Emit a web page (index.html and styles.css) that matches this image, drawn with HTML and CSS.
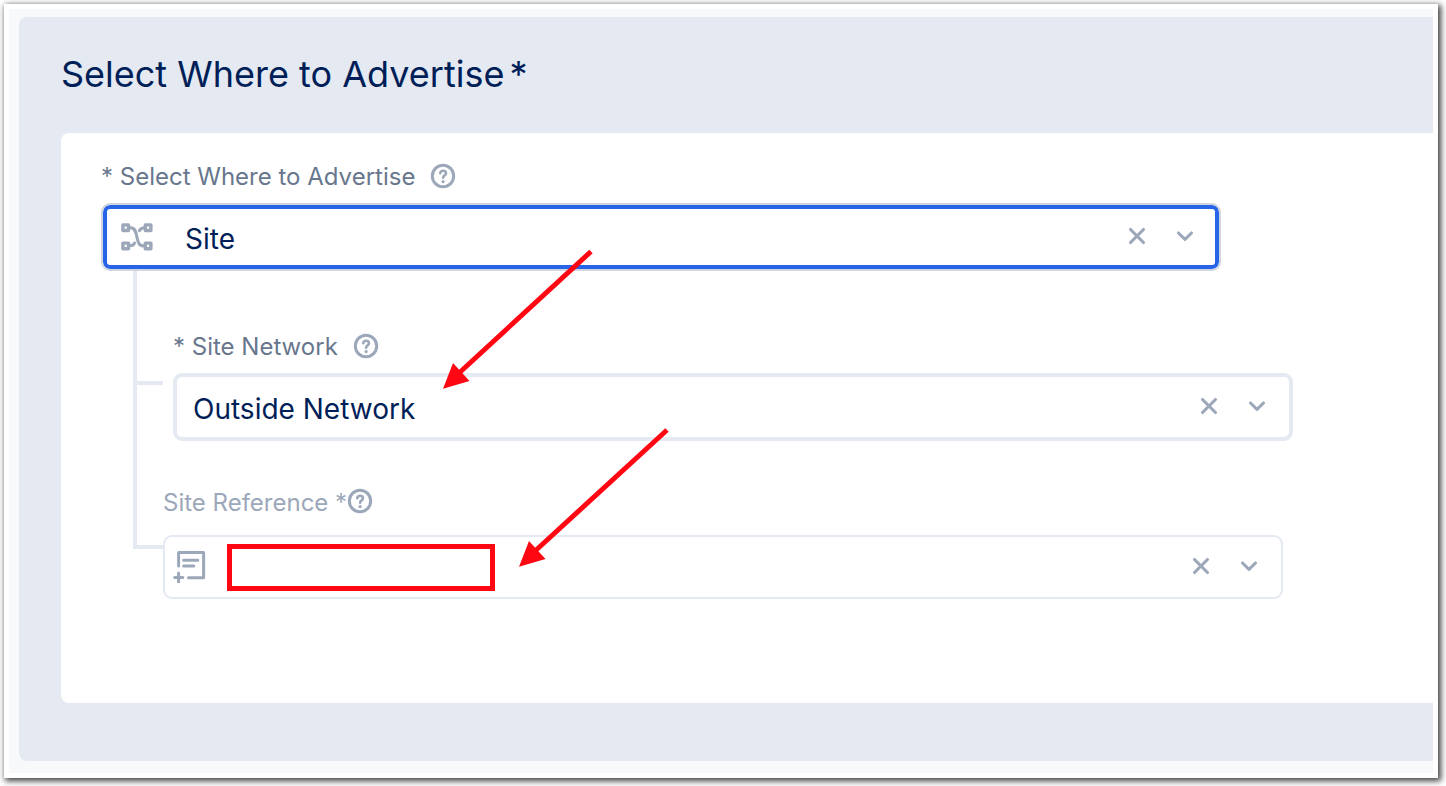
FILE: index.html
```
<!DOCTYPE html>
<html lang="en">
<head>
<meta charset="utf-8">
<title>Select Where to Advertise</title>
<link rel="stylesheet" href="styles.css">
</head>
<body>
<svg class="symbols" width="0" height="0" aria-hidden="true">
  <symbol id="help" viewBox="0 0 26 26">
    <circle cx="13" cy="13" r="10.700" stroke-width="3"/>
    <path d="M10.2 10.2c.3-1.7 1.4-2.500 2.900-2.500 1.700 0 2.900 1 2.900 2.500 0 1.200-.7 1.700-1.600 2.400-.9.7-1.300 1.100-1.300 2.200" stroke-width="2.6"/>
    <circle cx="13.1" cy="18.600" r="1.600" fill="currentColor" stroke="none"/>
  </symbol>
  <symbol id="clear" viewBox="0 0 20 20">
    <path d="M3.500 3.500 16.500 16.500M16.500 3.500 3.500 16.500" stroke-width="3.1"/>
  </symbol>
  <symbol id="chevron" viewBox="0 0 20 20">
    <path d="M3.500 7 10 13.300 16.500 7" stroke-width="3.1"/>
  </symbol>
</svg>
<main class="window">
  <div class="page">
    <section class="panel">
      <h1 class="title">Select Where to Advertise<span class="star">*</span></h1>
      <div class="card">
        <div class="label">* Select Where to Advertise<svg class="help"><use href="#help"/></svg></div>
        <div class="select focused">
          <svg class="lead" viewBox="0 0 32 28">
            <g stroke-width="3.4"><rect x="1.900" y="1.900" width="5.600" height="5.600"/><rect x="24.300" y="1.900" width="5.600" height="5.600"/><rect x="1.900" y="20.100" width="5.600" height="5.600"/><rect x="24.300" y="20.100" width="5.600" height="5.600"/></g>
            <path stroke-width="3.1" d="M8 4.700h1.800C18.500 4.700 13.200 22.900 22.200 22.900H24M24 4.700c-3 0-4.700.8-5.600 2.900M8 22.900c3 0 4.700-.8 5.600-2.900"/>
          </svg>
          <span class="value">Site</span>
          <svg class="action"><use href="#clear"/></svg>
          <svg class="action"><use href="#chevron"/></svg>
        </div>
        <div class="tree">
          <div class="rail"><div class="branch first"></div><div class="branch last"></div></div>
          <div class="children">
            <div class="network">
              <div class="label">* Site Network<svg class="help"><use href="#help"/></svg></div>
              <div class="select heavy">
                <span class="value">Outside Network</span>
                <svg class="action"><use href="#clear"/></svg>
                <svg class="action"><use href="#chevron"/></svg>
              </div>
            </div>
            <div class="label muted">Site Reference *<svg class="help"><use href="#help"/></svg></div>
            <div class="select plain">
              <svg class="lead note" viewBox="0 0 34 34">
                <path stroke-width="3" d="M5.600 17V3.500H30.600V28.700H15.500M10.600 11.200H24.800M10.600 17H20.800M5.600 24V33M1.600 28.500H9.800"/>
              </svg>
              <span class="redaction"></span>
              <svg class="action"><use href="#clear"/></svg>
              <svg class="action"><use href="#chevron"/></svg>
            </div>
          </div>
        </div>
      </div>
    </section>
  </div>
</main>
<svg class="arrows" viewBox="0 0 1446 786">
  <path d="M591 251.500 458 374M667 430 534 552" />
  <polygon points="443,388.700 453,363 469.500,381"/>
  <polygon points="519,566.800 529,541 545.500,559"/>
</svg>
</body>
</html>
```

FILE: styles.css
```
* { box-sizing: border-box; }
body {
  margin: 0;
  padding: 4px 8px 8px 4px;
  background: #fff;
  font-family: Inter, "Liberation Sans", sans-serif;
  overflow: hidden;
}
svg { fill: none; stroke: currentColor; stroke-linecap: round; stroke-linejoin: round; flex: none; }
.symbols { position: absolute; }
.window {
  height: 774px;
  padding: 5px;
  background: #fff;
  box-shadow: 2px 2px 6px 1px rgba(0, 0, 0, .75);
}
.page { height: 764px; padding: 8px 0 12px 10px; background: #f7f9fb; }
.panel {
  height: 744px;
  padding-left: 42px;
  border-radius: 8px 0 0 8px;
  background: #e4e9f2;
}
.title {
  margin: 0;
  height: 116px;
  line-height: 114px;
  font-size: 36px;
  font-weight: 400;
  color: #001e57;
}
.star { margin-left: 5px; }
.card {
  height: 570px;
  padding: 20px 0 0 40px;
  border-radius: 8px 0 0 8px;
  background: #fff;
}
.label {
  display: flex;
  align-items: center;
  height: 48px;
  padding-bottom: 2px;
  font-size: 24px;
  color: #68778d;
  white-space: pre;
}
.help { width: 26px; height: 26px; margin-left: 15px; color: #9ca8ba; }
.select {
  display: flex;
  align-items: center;
  width: 1120px;
  height: 68px;
  border-radius: 9px;
  color: #9ca8ba;
}
.focused {
  margin-top: 2px;
  padding: 0 24px 0 18px;
  border: 2px solid #cfd6e2;
  box-shadow: inset 0 0 0 4px #2864e8;
}
.heavy { padding: 0 22px 0 16px; border: 4px solid #e4e9f2; }
.plain { height: 64px; padding: 0 22px 0 8px; border: 2px solid #e4e9f2; }
.value { margin-right: auto; padding-top: 4px; font-size: 28px; color: #001e57; }
.lead { width: 32px; height: 28px; margin-right: 32px; }
.action { width: 20px; height: 20px; margin: 0 0 2px 28px; }
.tree { display: flex; padding-left: 32px; }
.rail { width: 30px; height: 278px; border-left: 4px solid #e4e9f2; }
.branch { height: 4px; background: #e4e9f2; }
.first { margin-top: 110px; }
.last { margin-top: 160px; }
.children { padding-top: 52px; }
.network { padding-left: 10px; }
.network .label { height: 50px; padding-bottom: 4px; }
.muted { height: 60px; margin-top: 32px; color: #9ca8ba; }
.muted .help { margin: 0 0 3px 0; }
.muted + .plain { margin-top: 2px; }
.note { width: 34px; height: 34px; margin: 0 20px 2px 0; }
.redaction { width: 268px; height: 47px; margin: 1px auto 0 0; border: 5px solid #ff0712; outline: 1px solid rgba(255, 7, 18, .35); outline-offset: -1px; }
.arrows {
  position: absolute;
  inset: 0;
  width: 1446px;
  height: 786px;
  color: #ff0712;
  stroke-width: 5;
  stroke-linecap: butt;
  pointer-events: none;
}
.arrows polygon { fill: currentColor; stroke: none; }
```
